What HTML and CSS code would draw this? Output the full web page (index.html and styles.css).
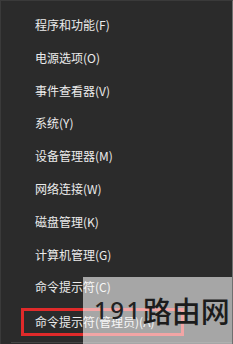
FILE: index.html
```html
<!DOCTYPE html>
<html lang="zh-CN">
<head>
<meta charset="utf-8">
<link rel="stylesheet" href="styles.css">
</head>
<body>
<div class="menu">
  <ul class="list">
    <li class="item">程序和功能(F)</li>
    <li class="item">电源选项(O)</li>
    <li class="item">事件查看器(V)</li>
    <li class="item">系统(Y)</li>
    <li class="item">设备管理器(M)</li>
    <li class="item">网络连接(W)</li>
    <li class="item">磁盘管理(K)</li>
    <li class="item">计算机管理(G)</li>
    <li class="item">命令提示符(C)</li>
    <li class="item highlight">命令提示符(管理员)(A)</li>
  </ul>
  <div class="sep"></div>
  <div class="watermark"><span class="wm-num">191</span><span class="wm-cjk">路由网</span></div>
</div>
</body>
</html>
```

FILE: styles.css
```css
html, body {
  margin: 0;
  padding: 0;
  background: #2b2b2b;
}
.menu {
  position: relative;
  width: 233px;
  height: 344px;
  box-sizing: border-box;
  background: #2b2b2b;
  border-left: 1px solid #3a3a3a;
  border-top: 1px solid #3a3a3a;
  border-right: 1px solid #707070;
  overflow: hidden;
  font-family: "Noto Sans CJK SC", "Noto Sans", sans-serif;
}
.list {
  list-style: none;
  margin: 0;
  padding: 8px 0 0 20px;
}
.item {
  height: 32.8px;
  line-height: 32.8px;
  padding-left: 14px;
  font-size: 12px;
  color: #ececec;
  white-space: nowrap;
}
.item.highlight {
  box-sizing: border-box;
  width: 163px;
  height: 28px;
  line-height: 22px;
  margin-top: 3.6px;
  padding-left: 11px;
  border: 3px solid #e02a2a;
}
.sep {
  position: absolute;
  left: 10px;
  right: 0;
  top: 341px;
  height: 1px;
  background: #444444;
}
.watermark {
  position: absolute;
  left: 82px;
  top: 276px;
  right: 0;
  bottom: 0;
  background: rgba(255, 255, 255, 0.58);
  display: flex;
  align-items: flex-end;
  padding: 0 0 22px 11px;
  color: #1c1c1c;
  white-space: nowrap;
}
.wm-num {
  font-family: "Noto Sans", sans-serif;
  font-size: 24px;
  line-height: 24px;
  letter-spacing: 2.5px;
  font-weight: 500;
  color: #222222;
}
.wm-cjk {
  font-family: "Noto Sans CJK SC", sans-serif;
  font-size: 29px;
  line-height: 29px;
  font-weight: 500;
  margin-bottom: -3px;
}
```
